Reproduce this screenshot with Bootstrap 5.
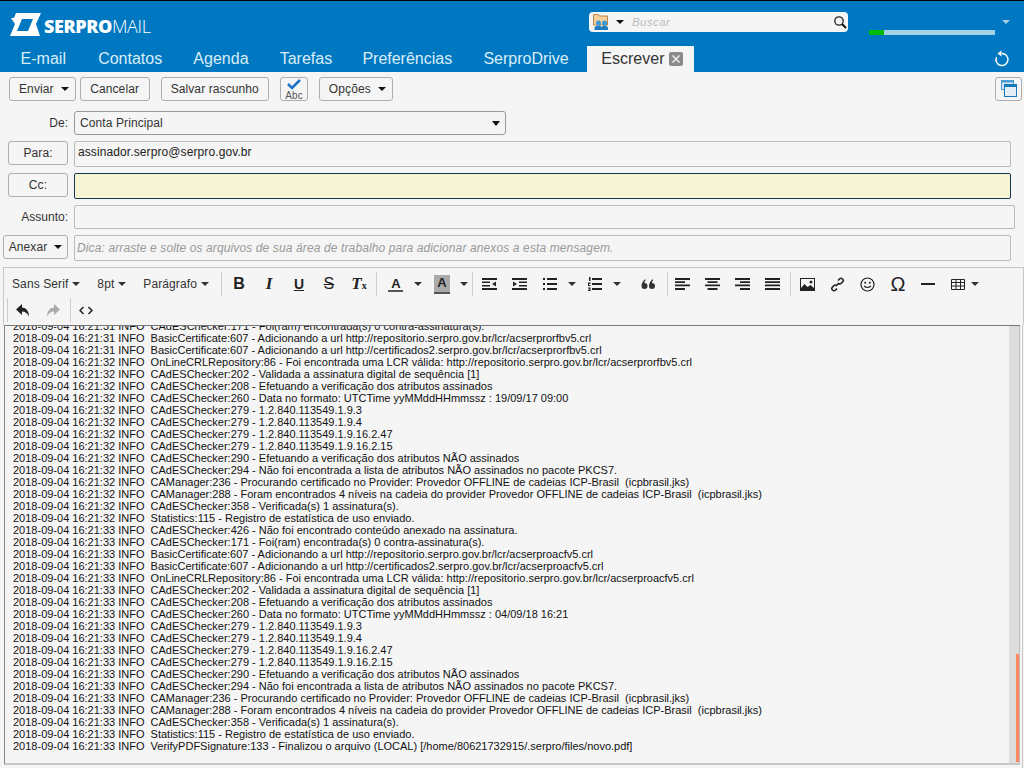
<!DOCTYPE html>
<html lang="pt-BR">
<head>
  <meta charset="UTF-8">
  <title>SerproMail - Escrever</title>
  <link href="https://cdn.jsdelivr.net/npm/bootstrap@5.3.0/dist/css/bootstrap.min.css" rel="stylesheet">
  <style>
    html, body { height: 768px; overflow: hidden; }
    body { background: #f5f5f5; color: #333; font-family: "Liberation Sans", Arial, sans-serif; font-size: 12px; }

    /* cabeçalho */
    .top { background: #0078c1; border-top: 1px solid #000; height: 72px; }
    .top-row { height: 45px; }
    .logo { margin-left: 9px; margin-top: 11px; }
    .logo-text { color: #fff; font-family: "Open Sans", sans-serif; font-size: 18px; line-height: 20px; margin-left: 3px; margin-top: 15px; letter-spacing: -.4px; }
    .logo-text b { font-weight: 800; }
    .logo-text span { font-weight: 300; }
    .top-right { margin-left: auto; }
    .search { background: #f5f5f5; border-radius: 4px; height: 20px; width: 259px; margin-top: 11px; padding: 0 1px 0 3px; }
    .search-caret { border-top: 4px solid #111; border-left: 4px solid transparent; border-right: 4px solid transparent; margin-left: 6px; }
    .search em { color: #bbb; font-size: 11.5px; margin-left: 8px; margin-top: 1px; letter-spacing: .4px; }
    .quota { width: 126px; height: 5px; background: #a6d0e6; margin-left: 21px; margin-top: 29px; }
    .quota div { background: #00bb00; height: 5px; }
    .user-caret { border-top: 4px solid #a6d0e6; border-left: 4px solid transparent; border-right: 4px solid transparent; width: 0; height: 0; margin-left: 7px; margin-right: 14px; margin-top: 19px; }
    .tabs { padding-left: 5px; height: 26px; }
    .tabs a { color: #d9edf7; display: block; font-size: 16px; line-height: 26px; padding: 0 15.6px; text-decoration: none; }
    .tabs a.first { padding-right: 16.6px; }
    .tabs a.mid { padding-right: 14.6px; }
    .tabs a.active { background: #f5f5f5; color: #333; margin-left: 3px; padding: 0 11px 0 14px; display: flex; align-items: center; }
    .tab-x { background: #8a8a8a; border-radius: 2px; height: 14px; margin-left: 5px; width: 14px; }
    .refresh { margin-right: 13px; margin-top: 4px; }

    /* botões */
    .btn-z { --bs-btn-padding-x: 9px; --bs-btn-padding-y: 0; --bs-btn-font-size: 12px; --bs-btn-line-height: 22px; --bs-btn-color: #333; --bs-btn-bg: #f5f5f5; --bs-btn-border-color: #adadad; --bs-btn-border-radius: 3px; --bs-btn-hover-bg: #f5f5f5; --bs-btn-hover-border-color: #adadad; --bs-btn-hover-color: #333; height: 24px; white-space: nowrap; letter-spacing: .1px; }
    .btn-z.dropdown-toggle { padding-right: 6px; }
    .dropdown-toggle::after { border-top: 4px solid #111; border-left: 4px solid transparent; border-right: 4px solid transparent; border-bottom: 0; margin-left: 7px; vertical-align: 2px; }
    .actions { padding: 5px 2px 0 9px; height: 39px; }
    .ico-btn { padding: 0; }
    .gap-l { margin-left: 11px; }
    .cancel-btn { width: 70px; }
    .abc-btn { width: 28px; }
    .win-btn { width: 27px; }

    /* formulário */
    .frm-row { margin-bottom: 6px; }
    .frm-label { width: 68px; flex: none; margin-right: 6px; text-align: right; line-height: 24px; }
    .lbl-btn { width: 60px; }
    .btn-z.anexar { width: 65px; padding-left: 4px; padding-right: 4px; }
    .frm-field { background: #f5f5f5; border: 1px solid #bbb; border-radius: 2px; color: #222; height: 26px; padding: 0 3px; line-height: 20px; font-size: 12px; letter-spacing: .1px; }
    .frm-field.sel { height: 24px; width: 432px; flex: none; border-color: #999; border-radius: 3px; padding: 0 5px; line-height: 22px; color: #333; display: flex; justify-content: space-between; align-items: center; }
    .frm-field.sel i { border-top: 5px solid #111; border-left: 4px solid transparent; border-right: 4px solid transparent; }
    .frm-field.focus { background: #f5f5d6; border-color: #17394f; }
    .frm-field.subj { height: 24px; }
    .frm-field.hint { color: #999; font-style: italic; line-height: 24px; padding-left: 2px; letter-spacing: .12px; }
    .me-wide { margin-right: 13px; }
    .me-narrow { margin-right: 9px; }

    /* barra do editor */
    .ed-bar { border: 1px solid #c8c8c8; border-bottom: 0; height: 58px; margin-left: 3px; padding-top: 3px; }
    .ed-row { height: 26px; }
    .ed-sel { color: #333; font-size: 12px; white-space: nowrap; letter-spacing: .1px; margin-left: 17px; }
    .ed-sel.first { margin-left: 8px; }
    .ed-sel::after, .car::after { content: ""; display: inline-block; border-top: 4px solid #333; border-left: 4px solid transparent; border-right: 4px solid transparent; margin-left: 4px; vertical-align: 2px; }
    .car { width: 15px; text-align: center; }
    .car.tight { width: 3px; margin-left: -2px; }
    .car::after { margin-left: 0; }
    .tb { width: 30px; height: 26px; display: flex; align-items: center; justify-content: center; color: #222; flex: none; }
    .tb.fmt { font-size: 16px; }
    .tb-under { font-size: 14px; font-weight: 700; text-decoration: underline; }
    .sep { width: 1px; height: 24px; background: #ccc; margin: 1px 2px; flex: none; }
    .sep.s1 { margin-left: 12px; }
    .sep.s2 { margin-left: 0; margin-right: 2px; }
    .sep.s3 { margin-left: 3px; margin-right: 0; }
    .sep.s4 { margin-left: 3px; margin-right: 0; }
    .sep.s5 { margin-right: 0; }
    .a-mark { display: inline-block; border-bottom: 2px solid #555; line-height: 13px; padding: 0 1px; font-weight: 700; font-size: 13px; width: 15px; text-align: center; }
    .a-bg { background: #aaa; width: 16px; height: 19px; line-height: 16px; }
    .tb-a { margin-left: 2px; }
    .tb-a2 { margin-left: 1px; }
    .tb-q { margin-left: 9px; }
    .ti { font-family: "Liberation Serif", serif; font-style: italic; font-weight: 700; font-size: 17px; }
    .ti small { font-size: 10px; font-style: normal; }
    .omega { font-size: 20px; line-height: 20px; }

    /* corpo */
    .ed-wrap { border-right: 1px solid #c8c8c8; height: 443px; margin-right: 1px; padding-left: 4px; padding-right: 2px; }
    .ed-body { border-top: 1px solid #777; border-left: 1px solid #888; border-bottom: 2px solid #c6c6c6; height: 440px; overflow: hidden; position: relative; }
    .log { color: #111; font-size: 11px; line-height: 12px; margin-top: -6px; padding-left: 8px; white-space: pre; }
    .sbar { background: #ddd; border-right: 1px solid #bbb; bottom: 0; position: absolute; right: 0; top: 0; width: 11px; }
    .sthumb { background: #ff8a5c; bottom: 1px; height: 108px; position: absolute; right: 0; width: 3px; }
  </style>
</head>
<body>
  <div class="top">
    <div class="top-row d-flex">
      <svg class="logo" width="32" height="25" viewBox="0 0 32 25">
        <path fill="#fff" fill-rule="evenodd" d="M7 1H32L27 12 31 24H1L6 12 2 6H5ZM13 7 8 19H19L24 7Z"/>
      </svg>
      <div class="logo-text"><b>SERPRO</b><span>MAIL</span></div>
      <div class="top-right d-flex">
        <div class="search d-flex align-items-center">
          <svg width="18" height="18" viewBox="0 0 18 18">
            <path fill="#f5cf98" stroke="#b8864c" d="M1.500 1.500h5l1 1.500h8v9h-14z"/>
            <circle cx="6.500" cy="10" r="2.500" fill="#3a9ad9"/><circle cx="12.500" cy="10" r="2.500" fill="#3a9ad9"/>
            <path fill="#1f7cc0" d="M2.500 17v-2.500q1-2 4-2t3 2q.5-2 3-2t3.500 2v2.500z"/>
          </svg>
          <span class="search-caret"></span>
          <em>Buscar</em>
          <svg class="ms-auto" width="14" height="14" viewBox="0 0 14 14"><circle cx="6" cy="6" r="4.200" fill="none" stroke="#222" stroke-width="1.300"/><path d="M9 9l4 4" stroke="#111" stroke-width="2"/></svg>
        </div>
        <div class="quota"><div style="width:12%"></div></div>
        <div class="user-caret"></div>
      </div>
    </div>
    <div class="tabs d-flex">
      <a href="#" class="first">E-mail</a>
      <a href="#">Contatos</a>
      <a href="#">Agenda</a>
      <a href="#" class="mid">Tarefas</a>
      <a href="#">Preferências</a>
      <a href="#">SerproDrive</a>
      <a href="#" class="active">Escrever <svg class="tab-x" viewBox="0 0 14 14"><path d="M3.500 3.500l7 7M10.500 3.500l-7 7" stroke="#eee" stroke-width="1.500"/></svg></a>
      <svg class="refresh ms-auto" width="18" height="18" viewBox="0 0 18 18"><path d="M9 3.500a6 6 0 1 1-5.500 3.500" fill="none" stroke="#fff" stroke-width="1.400"/><path d="M8.500 0.500v6l-4-3z" fill="#fff"/></svg>
    </div>
  </div>

  <div class="actions d-flex">
    <button class="btn btn-z dropdown-toggle me-1">Enviar</button>
    <button class="btn btn-z cancel-btn">Cancelar</button>
    <button class="btn btn-z gap-l">Salvar rascunho</button>
    <button class="btn btn-z ico-btn abc-btn gap-l">
      <svg width="26" height="22" viewBox="0 0 26 22" class="d-block">
        <path d="M7 6l4 4 8-8" fill="none" stroke="#1a72c9" stroke-width="2.500"/>
        <text x="13" y="20.500" text-anchor="middle" font-family="Liberation Sans" font-size="10" fill="#555">Abc</text>
      </svg>
    </button>
    <button class="btn btn-z dropdown-toggle gap-l">Opções</button>
    <button class="btn btn-z ico-btn win-btn ms-auto">
      <svg width="25" height="22" viewBox="0 0 25 22" class="d-block">
        <rect x="5.500" y="2.500" width="12" height="9" fill="#d6e8f5" stroke="#4a9ed3"/>
        <rect x="5.500" y="2.500" width="12" height="2" fill="#4a9ed3"/>
        <rect x="8.500" y="6.500" width="12" height="12" fill="#e4ecf4" stroke="#1578b8"/>
        <rect x="8.500" y="6.500" width="12" height="2.500" fill="#1578b8"/>
      </svg>
    </button>
  </div>

  <div class="frm-row d-flex">
    <div class="frm-label">De:</div>
    <div class="frm-field sel">Conta Principal<i></i></div>
  </div>
  <div class="frm-row d-flex">
    <div class="frm-label"><button class="btn btn-z lbl-btn float-end">Para:</button></div>
    <div class="frm-field flex-grow-1 me-wide">assinador.serpro@serpro.gov.br</div>
  </div>
  <div class="frm-row d-flex">
    <div class="frm-label"><button class="btn btn-z lbl-btn float-end">Cc:</button></div>
    <div class="frm-field focus flex-grow-1 me-wide"></div>
  </div>
  <div class="frm-row d-flex">
    <div class="frm-label">Assunto:</div>
    <div class="frm-field subj flex-grow-1 me-narrow"></div>
  </div>
  <div class="frm-row d-flex">
    <div class="frm-label"><button class="btn btn-z dropdown-toggle anexar float-end">Anexar</button></div>
    <div class="frm-field hint flex-grow-1 me-wide">Dica: arraste e solte os arquivos de sua área de trabalho para adicionar anexos a esta mensagem.</div>
  </div>

  <div class="ed-bar">
    <div class="ed-row d-flex align-items-center">
      <span class="ed-sel first">Sans Serif</span>
      <span class="ed-sel">8pt</span>
      <span class="ed-sel">Parágrafo</span>
      <span class="sep s1"></span>
      <span class="tb fmt"><b>B</b></span>
      <span class="tb fmt"><span class="ti">I</span></span>
      <span class="tb"><span class="tb-under">U</span></span>
      <span class="tb fmt"><s>S</s></span>
      <span class="tb"><span class="ti">T<small>x</small></span></span>
      <span class="sep"></span>
      <span class="tb tb-a"><span class="a-mark">A</span></span><span class="car"></span>
      <span class="tb tb-a2"><span class="a-mark a-bg">A</span></span><span class="car"></span>
      <span class="sep s2"></span>
      <span class="tb"><svg width="15" height="12" viewBox="0 0 15 12"><path fill="#222" d="M0 0h15v2H0zM0 10h15v2H0zM0 3.500h8v1.500H0zM0 7h8v1.500H0zM14 3.500v5l-4-2.500z"/></svg></span>
      <span class="tb"><svg width="15" height="12" viewBox="0 0 15 12"><path fill="#222" d="M0 0h15v2H0zM0 10h15v2H0zM7 3.500h8v1.500H7zM7 7h8v1.500H7zM1 3.500v5l4-2.500z"/></svg></span>
      <span class="tb"><svg width="14" height="12" viewBox="0 0 14 12"><path fill="#222" d="M0 0h2v2H0zM4 0h10v2H4zM0 5h2v2H0zM4 5h10v2H4zM0 10h2v2H0zM4 10h10v2H4z"/></svg></span><span class="car"></span>
      <span class="tb"><svg width="14" height="14" viewBox="0 0 14 14"><path fill="#222" d="M4 1h10v2H4zM4 6h10v2H4zM4 11h10v2H4zM1 0h1.500v4H1zM0 5.500h2.500v1.500H1v1h1.500v1H0zM0 10.500h2.500v3.500H0v-1h1.500v-.5H.5v-.7h1v-.3H0z"/></svg></span><span class="car"></span>
      <span class="tb tb-q"><svg width="15" height="10" viewBox="0 0 15 10"><path fill="#333" d="M3.500 4a3 3 0 1 1-3 3q0-4 4-7v1.500q-1.500 1-1 2.500zM11 4a3 3 0 1 1-3 3q0-4 4-7v1.500q-1.500 1-1 2.500z"/></svg></span>
      <span class="sep s3"></span>
      <span class="tb"><svg width="15" height="12" viewBox="0 0 15 12"><path fill="#222" d="M0 0h15v2H0zM0 3.300h10v1.700H0zM0 6.600h15v1.700H0zM0 10h10v2H0z"/></svg></span>
      <span class="tb"><svg width="15" height="12" viewBox="0 0 15 12"><path fill="#222" d="M0 0h15v2H0zM2.500 3.300h10v1.700h-10zM0 6.600h15v1.700H0zM2.500 10h10v2h-10z"/></svg></span>
      <span class="tb"><svg width="15" height="12" viewBox="0 0 15 12"><path fill="#222" d="M0 0h15v2H0zM5 3.300h10v1.700H5zM0 6.600h15v1.700H0zM5 10h10v2H5z"/></svg></span>
      <span class="tb"><svg width="15" height="12" viewBox="0 0 15 12"><path fill="#222" d="M0 0h15v2H0zM0 3.300h15v1.700H0zM0 6.600h15v1.700H0zM0 10h15v2H0z"/></svg></span>
      <span class="sep"></span>
      <span class="tb"><svg width="15" height="13" viewBox="0 0 15 13"><path fill="#222" fill-rule="evenodd" d="M0 0h15v13H0zM1 1v9l3.500-4 3 3 3-2 3.500 3V1z"/><circle cx="11" cy="4" r="1.500" fill="#222"/></svg></span>
      <span class="tb"><svg width="15" height="15" viewBox="0 0 15 15"><path fill="none" stroke="#222" stroke-width="1.600" d="M6 9l3-3M8 3.500l1.500-1.500q1.500-1.500 3 0t0 3L11 6.500q-1 1-2.500 0M7 11.500L5.500 13q-1.500 1.500-3 0t0-3L4 8.500q1-1 2.500 0"/></svg></span>
      <span class="tb"><svg width="15" height="15" viewBox="0 0 15 15"><circle cx="7.500" cy="7.500" r="6.500" fill="none" stroke="#222" stroke-width="1.200"/><circle cx="5.200" cy="5.700" r="1" fill="#222"/><circle cx="9.800" cy="5.700" r="1" fill="#222"/><path d="M4 9q3.500 3 7 0" fill="none" stroke="#222" stroke-width="1.200"/></svg></span>
      <span class="tb"><span class="omega">Ω</span></span>
      <span class="tb"><svg width="14" height="2" viewBox="0 0 14 2"><path fill="#222" d="M0 0h14v2H0z"/></svg></span>
      <span class="tb"><svg width="14" height="11" viewBox="0 0 14 11"><path fill="none" stroke="#222" d="M.5.500h13v10H.5zM.5 3.500h13M.5 7h13M5 .5v10M9.500.5v10"/></svg></span><span class="car tight"></span>
    </div>
    <div class="ed-row d-flex align-items-center">
      <span class="sep s4"></span>
      <span class="tb"><svg width="14" height="13" viewBox="0 0 14 13"><path fill="#222" d="M6 0v3.500q7 .5 7 9.500-2-5.500-7-5.500V11L0 5.500z"/></svg></span>
      <span class="tb"><svg width="14" height="13" viewBox="0 0 14 13"><path fill="#aaa" d="M8 0v3.500q-7 .5-7 9.500 2-5.500 7-5.500V11l6-5.500z"/></svg></span>
      <span class="sep s5"></span>
      <span class="tb"><svg width="14" height="9" viewBox="0 0 14 9"><path fill="none" stroke="#222" stroke-width="1.500" d="M4.500 1L1 4.500 4.500 8M9.500 1L13 4.500 9.500 8"/></svg></span>
    </div>
  </div>

  <div class="ed-wrap">
    <div class="ed-body">
      <div class="log">2018-09-04 16:21:31 INFO  CAdESChecker:171 - Foi(ram) encontrada(s) 0 contra-assinatura(s).
2018-09-04 16:21:31 INFO  BasicCertificate:607 - Adicionando a url http://repositorio.serpro.gov.br/lcr/acserprorfbv5.crl
2018-09-04 16:21:31 INFO  BasicCertificate:607 - Adicionando a url http://certificados2.serpro.gov.br/lcr/acserprorfbv5.crl
2018-09-04 16:21:32 INFO  OnLineCRLRepository:86 - Foi encontrada uma LCR válida: http://repositorio.serpro.gov.br/lcr/acserprorfbv5.crl
2018-09-04 16:21:32 INFO  CAdESChecker:202 - Validada a assinatura digital de sequência [1]
2018-09-04 16:21:32 INFO  CAdESChecker:208 - Efetuando a verificação dos atributos assinados
2018-09-04 16:21:32 INFO  CAdESChecker:260 - Data no formato: UTCTime yyMMddHHmmssz : 19/09/17 09:00
2018-09-04 16:21:32 INFO  CAdESChecker:279 - 1.2.840.113549.1.9.3
2018-09-04 16:21:32 INFO  CAdESChecker:279 - 1.2.840.113549.1.9.4
2018-09-04 16:21:32 INFO  CAdESChecker:279 - 1.2.840.113549.1.9.16.2.47
2018-09-04 16:21:32 INFO  CAdESChecker:279 - 1.2.840.113549.1.9.16.2.15
2018-09-04 16:21:32 INFO  CAdESChecker:290 - Efetuando a verificação dos atributos NÃO assinados
2018-09-04 16:21:32 INFO  CAdESChecker:294 - Não foi encontrada a lista de atributos NÃO assinados no pacote PKCS7.
2018-09-04 16:21:32 INFO  CAManager:236 - Procurando certificado no Provider: Provedor OFFLINE de cadeias ICP-Brasil  (icpbrasil.jks)
2018-09-04 16:21:32 INFO  CAManager:288 - Foram encontrados 4 níveis na cadeia do provider Provedor OFFLINE de cadeias ICP-Brasil  (icpbrasil.jks)
2018-09-04 16:21:32 INFO  CAdESChecker:358 - Verificada(s) 1 assinatura(s).
2018-09-04 16:21:32 INFO  Statistics:115 - Registro de estatística de uso enviado.
2018-09-04 16:21:33 INFO  CAdESChecker:426 - Não foi encontrado conteúdo anexado na assinatura.
2018-09-04 16:21:33 INFO  CAdESChecker:171 - Foi(ram) encontrada(s) 0 contra-assinatura(s).
2018-09-04 16:21:33 INFO  BasicCertificate:607 - Adicionando a url http://repositorio.serpro.gov.br/lcr/acserproacfv5.crl
2018-09-04 16:21:33 INFO  BasicCertificate:607 - Adicionando a url http://certificados2.serpro.gov.br/lcr/acserproacfv5.crl
2018-09-04 16:21:33 INFO  OnLineCRLRepository:86 - Foi encontrada uma LCR válida: http://repositorio.serpro.gov.br/lcr/acserproacfv5.crl
2018-09-04 16:21:33 INFO  CAdESChecker:202 - Validada a assinatura digital de sequência [1]
2018-09-04 16:21:33 INFO  CAdESChecker:208 - Efetuando a verificação dos atributos assinados
2018-09-04 16:21:33 INFO  CAdESChecker:260 - Data no formato: UTCTime yyMMddHHmmssz : 04/09/18 16:21
2018-09-04 16:21:33 INFO  CAdESChecker:279 - 1.2.840.113549.1.9.3
2018-09-04 16:21:33 INFO  CAdESChecker:279 - 1.2.840.113549.1.9.4
2018-09-04 16:21:33 INFO  CAdESChecker:279 - 1.2.840.113549.1.9.16.2.47
2018-09-04 16:21:33 INFO  CAdESChecker:279 - 1.2.840.113549.1.9.16.2.15
2018-09-04 16:21:33 INFO  CAdESChecker:290 - Efetuando a verificação dos atributos NÃO assinados
2018-09-04 16:21:33 INFO  CAdESChecker:294 - Não foi encontrada a lista de atributos NÃO assinados no pacote PKCS7.
2018-09-04 16:21:33 INFO  CAManager:236 - Procurando certificado no Provider: Provedor OFFLINE de cadeias ICP-Brasil  (icpbrasil.jks)
2018-09-04 16:21:33 INFO  CAManager:288 - Foram encontrados 4 níveis na cadeia do provider Provedor OFFLINE de cadeias ICP-Brasil  (icpbrasil.jks)
2018-09-04 16:21:33 INFO  CAdESChecker:358 - Verificada(s) 1 assinatura(s).
2018-09-04 16:21:33 INFO  Statistics:115 - Registro de estatística de uso enviado.
2018-09-04 16:21:33 INFO  VerifyPDFSignature:133 - Finalizou o arquivo (LOCAL) [/home/80621732915/.serpro/files/novo.pdf]</div>
      <div class="sbar"><div class="sthumb"></div></div>
    </div>
  </div>
  <script src="https://cdn.jsdelivr.net/npm/bootstrap@5.3.0/dist/js/bootstrap.bundle.min.js"></script>
</body>
</html>
